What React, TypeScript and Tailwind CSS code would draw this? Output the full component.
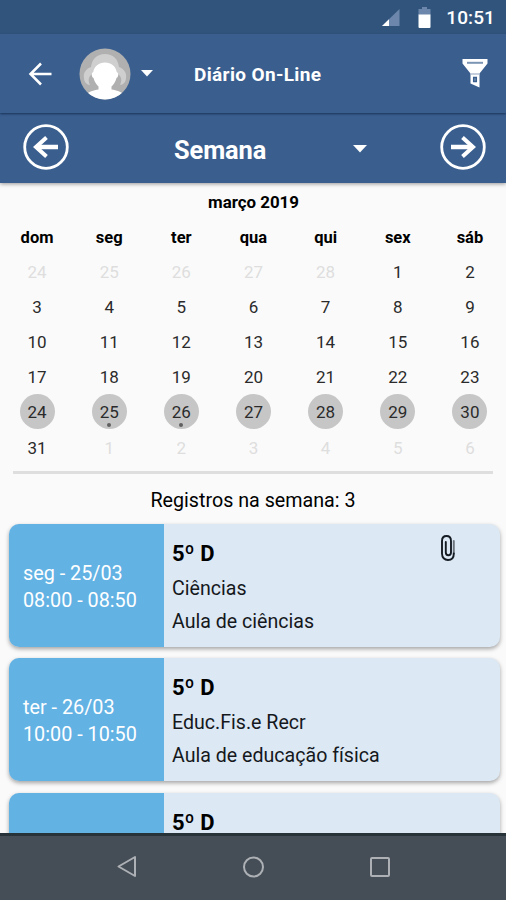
import clsx from "clsx";

const weekdays = ["dom", "seg", "ter", "qua", "qui", "sex", "sáb"];

const weeks = [
  [24, 25, 26, 27, 28, 1, 2],
  [3, 4, 5, 6, 7, 8, 9],
  [10, 11, 12, 13, 14, 15, 16],
  [17, 18, 19, 20, 21, 22, 23],
  [24, 25, 26, 27, 28, 29, 30],
  [31, 1, 2, 3, 4, 5, 6],
];

const SELECTED_WEEK = 4;
const daysWithRecords = [25, 26];

type ClassRecord = {
  group: string;
  day?: string;
  time?: string;
  subject?: string;
  title?: string;
  attachment?: boolean;
};

const records: ClassRecord[] = [
  {
    day: "seg - 25/03",
    time: "08:00 - 08:50",
    group: "5º D",
    subject: "Ciências",
    title: "Aula de ciências",
    attachment: true,
  },
  {
    day: "ter - 26/03",
    time: "10:00 - 10:50",
    group: "5º D",
    subject: "Educ.Fis.e Recr",
    title: "Aula de educação física",
  },
  { group: "5º D" },
];

function StatusBar() {
  return (
    <div className="flex h-[34px] shrink-0 items-center justify-end bg-[#31547d] pr-[11px] text-white">
      <svg width="18" height="18" viewBox="0 0 18 18" className="mt-0.5 mr-[18px]">
        <path d="M17.500 0v17H0z" fill="#6c87ab" />
        <path d="M7 10.200v6.800H0z" fill="#fff" />
      </svg>
      <svg width="13" height="22" viewBox="0 0 13 22" className="mt-px mr-[15px]">
        <path d="M4 0h5v2h3.500v6H.5V2H4z" fill="#6c87ab" />
        <path d="M.5 7.500h12V20a1 1 0 0 1-1 1h-10a1 1 0 0 1-1-1z" fill="#fff" />
      </svg>
      <span className="mt-0.5 text-[19px] leading-6 font-medium tracking-[0.1px]">10:51</span>
    </div>
  );
}

function Avatar() {
  return (
    <svg width="52" height="52" viewBox="0 0 52 52">
      <defs>
        <clipPath id="avatar">
          <circle cx="26" cy="26" r="25.500" />
        </clipPath>
      </defs>
      <g clipPath="url(#avatar)">
        <rect width="52" height="52" fill="#b0b0b0" />
        <path
          d="M26 6c-8 0-13 5-14 13-5 2-8 6-7 11 0 4 3 7 6 7-2-4-2-8 2-11h26c4 3 4 7 2 11 3 0 6-3 6-7 1-5-2-9-7-11-1-8-6-13-14-13z"
          fill="#cfcfcf"
        />
        <path
          d="M26 14.500c-6 0-11 4-11.700 9.500-2.300 1-1.800 5 .2 6 1 4 3 6.500 5 8.500v3c-5 .5-10 2.500-12.500 5v6h38v-6c-2.500-2.500-7.500-4.500-12.500-5v-3c2-2 4-4.500 5-8.500 2-1 2.500-5 .2-6-.7-5.500-5.700-9.500-11.700-9.500z"
          fill="#fff"
        />
      </g>
    </svg>
  );
}

function Header() {
  return (
    <header className="relative z-10 flex h-[79px] shrink-0 items-center bg-[#3a5f8f] px-[27px] text-white shadow-[0_1px_2px_rgba(0,20,50,0.6)]">
      <svg width="26" height="24" viewBox="0 0 26 24" fill="none" stroke="#fff" strokeWidth="2.500">
        <path d="M24.500 12H3.500M14 1.500 3.500 12 14 22.500" />
      </svg>
      <div className="ml-[26px]">
        <Avatar />
      </div>
      <svg width="12" height="7" viewBox="0 0 12 7" className="ml-[10px]">
        <path d="M0 0h12L6 6.500z" fill="#fff" />
      </svg>
      <h1 className="mt-[3px] ml-[41px] text-[19px] leading-7 font-bold tracking-[0.35px]">Diário On-Line</h1>
      <svg width="28" height="31" viewBox="0 0 28 31" className="-mr-[10px] ml-auto">
        <path d="M1.500 1h25v4.500L18.500 15.500V29.500L9.500 25.500v-10L1.500 5.500z" fill="#fff" />
        <path d="M6 4.800h16" stroke="#7d95b5" strokeWidth="2" />
        <path d="M10 16h8.500" stroke="#9caec6" strokeWidth="1.200" />
        <path d="M12.700 19.500h2.600v4h-2.600z" fill="#8aa0bd" stroke="#3a5f8f" strokeWidth="1.500" />
      </svg>
    </header>
  );
}

function CircleArrow({ flip = false }: { flip?: boolean }) {
  return (
    <svg width="46" height="46" viewBox="0 0 46 46" fill="none" stroke="#fff" className={clsx(flip && "-scale-x-100")}>
      <circle cx="23" cy="23" r="21.300" strokeWidth="2.800" />
      <path d="M35 23H13" strokeWidth="4.500" />
      <path d="M23.500 13.500 13 23l10.500 9.500" strokeWidth="4" />
    </svg>
  );
}

function PeriodBar() {
  return (
    <div className="relative flex h-[70px] shrink-0 items-center bg-[#3a5f8f] px-[23px] pb-[2px] text-white shadow-[0_1px_4px_rgba(0,0,0,0.4)]">
      <CircleArrow />
      <span className="mt-[5px] ml-[105px] text-[25.400px] leading-8 font-bold tracking-[-0.1px]">Semana</span>
      <svg width="14" height="8" viewBox="0 0 14 8" className="mt-1 ml-[87px]">
        <path d="M0 0h14L7 7.500z" fill="#fff" />
      </svg>
      <div className="-mr-[3px] ml-auto">
        <CircleArrow flip />
      </div>
    </div>
  );
}

function Calendar() {
  return (
    <section className="pt-[9px] pl-px text-center">
      <h2 className="text-[16.900px] leading-5 font-bold">março 2019</h2>
      <div className="mt-[16px] grid grid-cols-7 text-[16.500px] leading-5 font-bold">
        {weekdays.map((name) => (
          <span key={name}>{name}</span>
        ))}
      </div>
      <div className="mt-[6px] text-[17px] leading-5 text-[#2b2b2b]">
        {weeks.map((days, week) => (
          <div key={week} className="grid h-[35.100px] grid-cols-7 place-items-center">
            {days.map((day, i) => {
              const outside = (week === 0 && day > 20) || (week === 5 && day < 20);
              const selected = week === SELECTED_WEEK;
              return (
                <span
                  key={i}
                  className={clsx(
                    "relative flex size-[35px] items-center justify-center rounded-full pt-px",
                    outside && "text-[#dedede]",
                    selected && "bg-[#c6c6c6] pt-[2px]",
                  )}
                >
                  {day}
                  {selected && daysWithRecords.includes(day) && (
                    <i className="absolute bottom-[2px] left-[15.500px] size-1 rounded-full bg-[#606060]" />
                  )}
                </span>
              );
            })}
          </div>
        ))}
      </div>
    </section>
  );
}

function Paperclip() {
  return (
    <svg width="16" height="28" viewBox="0 0 16 28" fill="none" strokeWidth="1.900" strokeLinecap="round">
      <path d="M13.800 7v12.500" stroke="#6b737b" />
      <path
        d="M13.800 19.500c0 4-2.300 6.500-5.800 6.500s-6-2.500-6-6.500V7c0-3 1.700-5 4.500-5S11 4 11 7v11.500c0 1.600-1 2.700-2.600 2.700s-2.600-1.100-2.600-2.700V8"
        stroke="#151b22"
      />
    </svg>
  );
}

function RecordCard({ record }: { record: ClassRecord }) {
  return (
    <article className="flex h-[123px] shrink-0 overflow-hidden rounded-[10px] bg-[#dce8f4] shadow-[0_2px_4px_rgba(0,0,0,0.35)]">
      <div className="flex w-[155px] shrink-0 flex-col justify-center bg-[#63b2e4] pt-[3px] pl-[14px] text-[19.800px] leading-[27px] text-white">
        {record.day && <span>{record.day}</span>}
        {record.time && <span>{record.time}</span>}
      </div>
      <div className="flex-1 pt-[20px] pl-[8px] text-[19.600px] whitespace-nowrap text-[#15181c]">
        <h3 className="text-[22px] leading-[19px] font-bold text-black">{record.group}</h3>
        {record.subject && <p className="mt-[10px] leading-8">{record.subject}</p>}
        {record.title && <p className="leading-[33px]">{record.title}</p>}
      </div>
      {record.attachment && (
        <div className="pt-[10px] pr-[44px]">
          <Paperclip />
        </div>
      )}
    </article>
  );
}

function NavigationBar() {
  return (
    <nav className="flex h-[67px] shrink-0 items-center justify-center gap-[105px] border-t-[3px] border-[#273239] bg-[#454d56] pb-[2px]">
      <svg width="22" height="24" viewBox="0 0 22 24" fill="none" stroke="#adb1b5" strokeWidth="2">
        <path d="M20 2v19L3.500 11.500z" strokeLinejoin="round" />
      </svg>
      <svg width="22" height="22" viewBox="0 0 22 22" fill="none" stroke="#adb1b5" strokeWidth="2">
        <circle cx="11.500" cy="11" r="9.500" />
      </svg>
      <svg width="22" height="22" viewBox="0 0 22 22" fill="none" stroke="#adb1b5" strokeWidth="2">
        <rect x="2" y="2" width="18" height="18" rx="1" />
      </svg>
    </nav>
  );
}

export default function App() {
  return (
    <div className="flex h-[900px] w-[506px] flex-col overflow-hidden bg-[#fafafa] font-['Roboto',sans-serif] text-black">
      <StatusBar />
      <Header />
      <PeriodBar />
      <main className="flex min-h-0 flex-1 flex-col overflow-hidden">
        <Calendar />
        <hr className="mx-[13px] mt-[6px] h-[3px] shrink-0 border-0 bg-[#dedede]" />
        <p className="mt-[13px] text-center text-[19.700px] leading-7">Registros na semana: 3</p>
        <div className="flex flex-col gap-[11.500px] px-[9px] pt-[9px] pr-[6px]">
          {records.map((record, i) => (
            <RecordCard key={i} record={record} />
          ))}
        </div>
      </main>
      <NavigationBar />
    </div>
  );
}
